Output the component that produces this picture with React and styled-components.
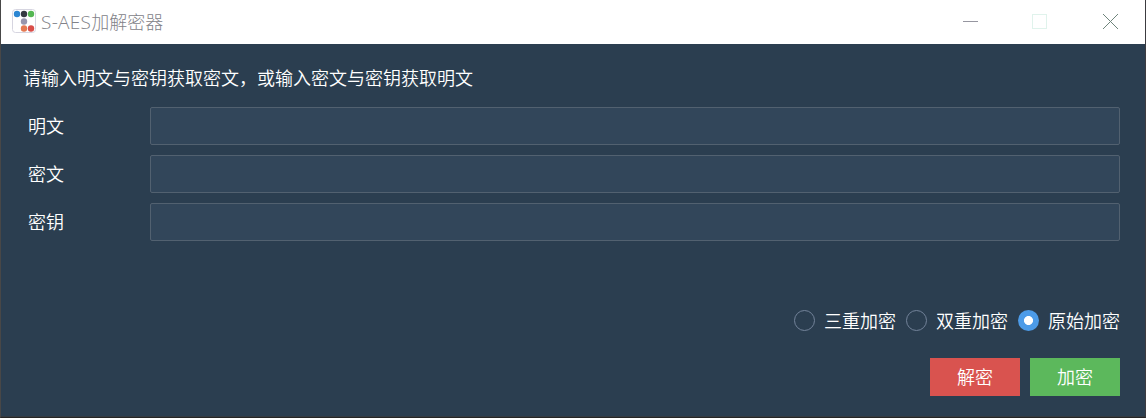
import React, { useState } from 'react';
import styled, { createGlobalStyle } from 'styled-components';

const GlobalStyle = createGlobalStyle`
  * { box-sizing: border-box; }
  body {
    margin: 0;
    background: #2b2b2b;
    font-family: "Noto Sans CJK SC", sans-serif;
    font-weight: 350;
    font-size: 18px;
  }
`;

const Window = styled.div`
  display: flex;
  flex-direction: column;
  width: 1146px;
  height: 418px;
  border: solid #484747;
  border-width: 0 1px 1px;
  border-right-color: #3c3b40;
  border-bottom-color: #262626;
`;

const TitleBar = styled.header`
  display: flex;
  align-items: center;
  height: 44px;
  flex: none;
  padding: 0 26px 0 11px;
  background: #fff;
`;

const AppIcon = styled.svg`
  flex: none;
  margin-top: -2px;
`;

const Title = styled.h1`
  flex: 1;
  margin: -2px 0 0 5px;
  font-size: 18px;
  font-weight: 300;
  line-height: 26px;
  color: #828288;
  white-space: nowrap;
`;

const LatinText = styled.span`
  font-family: "Open Sans", sans-serif;
  font-size: 19px;
  line-height: 1;
  letter-spacing: 0.3px;
`;

const WindowControls = styled.div`
  display: flex;
  gap: 54px;
`;

const ControlButton = styled.button`
  display: flex;
  width: 16px;
  height: 16px;
  padding: 0;
  border: 0;
  background: none;
`;

const ControlIcon = styled.svg`
  overflow: visible;
  fill: none;
`;

const Body = styled.main`
  display: flex;
  flex-direction: column;
  flex: 1;
  padding: 18px 25px 20px 22px;
  background: #2b3e50;
  border-bottom: 1px solid #343b42;
  color: #fff;
`;

const Hint = styled.p`
  margin: 0 0 15px;
  line-height: 30px;
  white-space: nowrap;
`;

const Fields = styled.div`
  display: flex;
  flex-direction: column;
  gap: 10px;
`;

const FieldRow = styled.label`
  display: grid;
  grid-template-columns: 122px 1fr;
  align-items: center;
  padding-left: 5px;
`;

const FieldName = styled.span`
  padding-bottom: 2px;
`;

const Input = styled.input`
  width: 100%;
  height: 38px;
  padding: 0 10px;
  border: 1px solid #526170;
  border-radius: 2px;
  outline: none;
  background: #32465a;
  color: #fff;
  font: inherit;
`;

const Modes = styled.div`
  display: flex;
  justify-content: flex-end;
  gap: 10px;
  margin-top: 65px;
`;

const Mode = styled.label`
  display: flex;
  align-items: center;
  gap: 9px;
  height: 28px;
  line-height: 28px;
`;

const Radio = styled.input`
  appearance: none;
  width: 21px;
  height: 21px;
  margin: 0;
  border: 1px solid #73839a;
  border-radius: 50%;

  &:checked {
    border: 0;
    background: radial-gradient(circle, #fff 4.1px, #4c9be8 4.9px);
  }
`;

const Actions = styled.div`
  display: flex;
  justify-content: flex-end;
  gap: 10px;
  margin-top: auto;
`;

const ActionButton = styled.button`
  width: 90px;
  height: 38px;
  padding: 0 0 2px;
  border: 0;
  background: ${({ $color }) => $color};
  color: #fff;
  font: inherit;
`;

const dots = [
  [5, 5, '#2b86d2'],
  [12, 5, '#343a40'],
  [19, 5, '#54b652'],
  [12, 12.5, '#9795ad'],
  [12, 19.5, '#e47952'],
  [19, 19.5, '#d94d48'],
];

const fields = ['明文', '密文', '密钥'];
const modes = ['三重加密', '双重加密', '原始加密'];

export default function App() {
  const [mode, setMode] = useState('原始加密');

  return (
    <Window>
      <GlobalStyle />
      <TitleBar>
        <AppIcon width="24" height="24" viewBox="0 0 24 24">
          <rect x=".5" y=".5" width="23" height="23" rx="3" fill="#fff" stroke="#d6d5e0" />
          {dots.map(([x, y, color]) => (
            <circle key={`${x}-${y}`} cx={x} cy={y} r="3.2" fill={color} />
          ))}
        </AppIcon>
        <Title><LatinText>S-AES</LatinText>加解密器</Title>
        <WindowControls>
          <ControlButton aria-label="最小化">
            <ControlIcon width="16" height="16" stroke="#9696a0">
              <path d="M0 7.5h15" />
            </ControlIcon>
          </ControlButton>
          <ControlButton aria-label="最大化">
            <ControlIcon width="16" height="16" stroke="#e0f3ec">
              <rect x="-.5" y=".5" width="14" height="14" />
            </ControlIcon>
          </ControlButton>
          <ControlButton aria-label="关闭">
            <ControlIcon width="16" height="16" stroke="#6f857c">
              <path d="M0 0l15 15M15 0l-15 15" />
            </ControlIcon>
          </ControlButton>
        </WindowControls>
      </TitleBar>
      <Body>
        <Hint>请输入明文与密钥获取密文，或输入密文与密钥获取明文</Hint>
        <Fields>
          {fields.map((name) => (
            <FieldRow key={name}>
              <FieldName>{name}</FieldName>
              <Input type="text" />
            </FieldRow>
          ))}
        </Fields>
        <Modes>
          {modes.map((name) => (
            <Mode key={name}>
              <Radio
                type="radio"
                name="mode"
                checked={mode === name}
                onChange={() => setMode(name)}
              />
              {name}
            </Mode>
          ))}
        </Modes>
        <Actions>
          <ActionButton $color="#d9534f">解密</ActionButton>
          <ActionButton $color="#5cb85c">加密</ActionButton>
        </Actions>
      </Body>
    </Window>
  );
}
